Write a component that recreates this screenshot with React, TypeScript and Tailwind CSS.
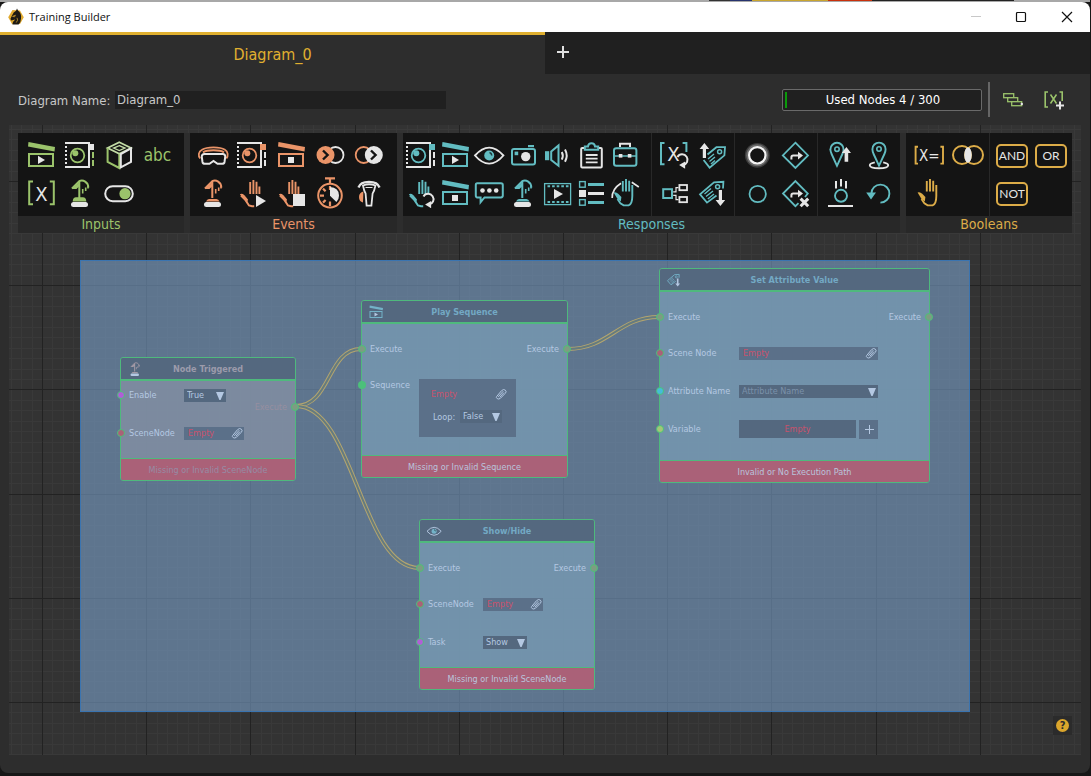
import React from "react";

const W = "#e6e6e6";
const GREEN = "#9bc36b";
const ORANGE = "#ea9468";
const TEAL = "#62bcc1";
const GOLD = "#dcac48";

type Tint = { c: string };

function Svg({ children }: { children: React.ReactNode }) {
  return (
    <svg viewBox="0 0 32 32" className="h-8 w-8" fill="none" aria-hidden="true">
      {children}
    </svg>
  );
}

/* ---------- palette icons ---------- */

function Clap({ c, stop, light = W }: Tint & { stop?: boolean; light?: string }) {
  return (
    <>
      <path d="M3.5 3 30 8 29.5 12.6 3 7.6Z" fill={c} />
      <rect x="4" y="15" width="24" height="12" stroke={c} strokeWidth="2" />
      {stop ? <rect x="13" y="18" width="6" height="6" fill={light} /> : <path d="M13 16.8 20 20.9 13 25Z" fill={light} />}
    </>
  );
}

function FrameEye({ c, square, dash }: Tint & { square: string; dash: string }) {
  return (
    <>
      <path d="M1 4H25V28H1" stroke={W} strokeWidth="2" />
      <path d="M2 3V29" stroke={W} strokeWidth="2" strokeDasharray="2 2" />
      <rect x="24" y="5" width="6" height="6" fill={square} />
      <path d="M29 13V19M29 21V27" stroke={dash} strokeWidth="2" />
      <circle cx="13.5" cy="16.5" r="6.8" stroke={c} strokeWidth="1.8" />
      <circle cx="11.3" cy="14.3" r="3" fill={c} />
    </>
  );
}

function Cube() {
  return (
    <>
      <path d="M16.3 3.3 28 9 16.3 14.7 4.6 9Z" stroke="#c2dba5" strokeWidth="1.8" />
      <path d="M16.3 6.6 22 9.1 16.3 11.6 10.6 9.1Z" stroke="#c2dba5" strokeWidth="1.3" />
      <path d="M4.6 9V23L16.3 29V14.7" stroke={GREEN} strokeWidth="2" />
      <path d="M28 9.5V23L17.8 28.4V15.2Z" stroke={W} strokeWidth="2" />
    </>
  );
}

function BracketX() {
  return (
    <>
      <path d="M8 4.5H4.2V27.3H8M24.8 4.5H28.8V27.3H24.8" stroke={GREEN} strokeWidth="2" />
      <text x="16.5" y="23.6" textAnchor="middle" fontSize="20" fill={W} className="font-['DejaVu_Sans_Condensed','Noto_Sans',sans-serif]">X</text>
    </>
  );
}

function Lever({ c, low, light = W }: Tint & { low?: boolean; light?: string }) {
  return (
    <>
      <path d="M8 11.5 15.2 4.2C19 2.3 24.3 5 24.3 10.5" stroke={c} strokeWidth="2" />
      <path d="M7.5 12 16 5V8.5L12.5 12Z" fill={c} />
      <path d="M15.3 5V21" stroke={c} strokeWidth="2" />
      <path d="M18.7 12V16.5M21.7 10.5V14M24 8V11.5" stroke={c} strokeWidth="1.6" />
      {low ? (
        <path d="M9 24.5Q10 22 12 22H19.5Q21.5 22 22.5 24.5Z" fill={c} />
      ) : (
        <path d="M8.7 24.5Q9 20.3 12 20.3H19Q22 20.3 22.3 24.5Z" fill={c} />
      )}
      <rect x="7" y="25" width="17" height="5" rx="2.5" fill={light} />
    </>
  );
}

function Toggle() {
  return (
    <>
      <rect x="2.2" y="9.2" width="27.6" height="15" rx="7.5" stroke={W} strokeWidth="2" />
      <circle cx="22" cy="16.7" r="5.6" fill={GREEN} />
    </>
  );
}

function Goggles() {
  return (
    <>
      <path d="M3.2 19.5C1 17 1.2 12.8 5 10.8 10 7.6 23 7.6 28 10.8 31.2 12.6 31.4 17 29.4 19.5" stroke={ORANGE} strokeWidth="1.8" />
      <path d="M6 13.4C10 10.6 23 10.6 27 13.4" stroke={ORANGE} strokeWidth="2" />
      <path d="M7.5 15H25.6Q28.4 15 28.2 17.8L27.5 23Q27.2 24.8 25 24.8H20.5L16.5 22 12.5 24.8H8Q5.8 24.8 5.5 23L4.8 17.8Q4.7 15 7.5 15Z" stroke={W} strokeWidth="2" />
    </>
  );
}

function CircleArrow({ flip }: { flip?: boolean }) {
  return flip ? (
    <>
      <circle cx="10.7" cy="16" r="8" stroke={ORANGE} strokeWidth="1.8" />
      <circle cx="20.8" cy="16" r="9" fill={W} />
      <path d="M18 11.5 22.6 16 18 20.5" stroke="#141414" strokeWidth="2.4" />
    </>
  ) : (
    <>
      <circle cx="21.5" cy="16" r="8" stroke={W} strokeWidth="1.8" />
      <circle cx="11.5" cy="16" r="9" fill={ORANGE} />
      <path d="M9 11.5 13.6 16 9 20.5" stroke="#141414" strokeWidth="2.4" />
    </>
  );
}

function HandBase({ c }: Tint) {
  return (
    <>
      <path d="M14.2 5V17M17.4 3V17M20.5 4.8V17M23.4 9.5V17" stroke={c} strokeWidth="1.9" />
      <path d="M3.8 17.2Q6 16 8.4 18.2L12 22.5 11.2 25.5 8.5 22.8Z" fill={c} />
      <path d="M5 18.5 9 22.5 13 28.5 16 29.3H18.2" stroke={c} strokeWidth="2" />
    </>
  );
}

function HandPlay() {
  return (
    <>
      <HandBase c={ORANGE} />
      <path d="M20 18 30 24 20 30Z" fill={W} />
    </>
  );
}

function HandStop() {
  return (
    <>
      <HandBase c={ORANGE} />
      <rect x="18" y="17" width="12" height="12" fill={W} />
    </>
  );
}

function RotateArrow({ x, y }: { x: number; y: number }) {
  return (
    <g transform={`translate(${x} ${y})`}>
      <path d="M-5 -2.5A5.4 5.4 0 1 1 0.5 5.6" stroke={W} strokeWidth="2" />
      <path d="M2.6 2V9.2L-3.4 5.6Z" fill={W} />
    </g>
  );
}

function HandRotate() {
  return (
    <>
      <HandBase c={TEAL} />
      <RotateArrow x={23.5} y={22} />
    </>
  );
}

function Stopwatch() {
  return (
    <>
      <circle cx="16" cy="18.6" r="11.8" stroke={ORANGE} strokeWidth="2" />
      <path d="M11 1.4H21M16 2V6.5M16 9V13M6 18.6H10M16 24.5V29M9 11.6 11.6 14.2M9 25.6 11.6 23" stroke={ORANGE} strokeWidth="2.2" />
      <path d="M16 10Q25 10.5 25 18.6 25 22.6 22.4 25L16 18.8Z" fill={W} />
    </>
  );
}

function Tracker() {
  return (
    <>
      <path d="M5.5 10.5C8 3 24 3 26.5 10.5" stroke={W} strokeWidth="2.4" />
      <path d="M10 8.5Q11 14 12.6 16.5L13.6 28.6H18.4L19.6 16.5Q21.4 14 22.4 8.5Q16 6 10 8.5Z" stroke={W} strokeWidth="1.8" />
      <path d="M12.5 10.5H19.5" stroke={W} strokeWidth="1.2" />
      <path d="M10.4 14.5Q6 15.5 6 20T10 25.5Z" fill={ORANGE} />
    </>
  );
}

function Eye({ c, light = W }: Tint & { light?: string }) {
  return (
    <>
      <path d="M2 16.5Q9 8.6 16.2 8.6T30.4 16.5Q23.5 24.6 16.2 24.6T2 16.5Z" stroke={light} strokeWidth="1.9" />
      <circle cx="16.2" cy="16.5" r="5" fill={c} />
      <path d="M16.5 13.5Q18.6 14 18.8 16.5" stroke="#1d3a3c" strokeWidth="1.6" />
    </>
  );
}

function Camera() {
  return (
    <>
      <rect x="5" y="10" width="23" height="15.5" rx="2" stroke={TEAL} strokeWidth="2" />
      <rect x="21" y="6" width="6" height="2.2" fill={TEAL} />
      <circle cx="18.7" cy="17.6" r="4.7" fill={W} />
      <rect x="7.6" y="12.6" width="3.6" height="3.6" fill={TEAL} />
    </>
  );
}

function Speaker() {
  return (
    <>
      <rect x="4" y="12.2" width="4.2" height="9" fill={TEAL} />
      <path d="M10.2 12.5 17.5 6.4V26.8L10.2 21Z" stroke={TEAL} strokeWidth="2" />
      <path d="M20.8 13Q22.8 16.7 20.8 20.6M24 10.6Q27.4 16.6 24 22.8" stroke={W} strokeWidth="2" />
    </>
  );
}

function Clipboard() {
  return (
    <>
      <rect x="6.2" y="9" width="20.6" height="19.6" rx="1" stroke={W} strokeWidth="2" />
      <path d="M9.8 10.8V7.4H13Q13.4 4.2 16.5 4.2T20 7.4H23.2V10.8Z" fill="#141414" stroke={TEAL} strokeWidth="2" />
      <path d="M10.8 16H22.6M10.8 19.7H22.6M10.8 23.4H22.6" stroke={W} strokeWidth="1.8" />
    </>
  );
}

function Briefcase() {
  return (
    <>
      <path d="M11 8V4.8H21V8" stroke={W} strokeWidth="2" />
      <rect x="5" y="9.2" width="22.4" height="17.6" rx="2.2" stroke={TEAL} strokeWidth="2" />
      <path d="M5 17H27.4" stroke={TEAL} strokeWidth="1.6" />
      <rect x="9.8" y="15" width="3.6" height="3.6" fill={W} />
      <rect x="18.8" y="15" width="3.6" height="3.6" fill={W} />
    </>
  );
}

function Speech() {
  return (
    <>
      <path d="M4.2 6.2H28Q29.8 6.2 29.8 8V18.6Q29.8 20.4 28 20.4H11.5L7.6 25.2V20.4H4.2Q2.8 20.4 2.8 18.6V8Q2.8 6.2 4.2 6.2Z" stroke={TEAL} strokeWidth="2" />
      <circle cx="9.5" cy="13.5" r="2.3" fill={W} />
      <circle cx="16.4" cy="13.5" r="2.3" fill={W} />
      <circle cx="23.2" cy="13.5" r="2.3" fill={W} />
    </>
  );
}

function Film() {
  return (
    <>
      <rect x="3.6" y="6.6" width="26" height="21" stroke={TEAL} strokeWidth="1.3" />
      <path d="M6.5 9.2H27.5M6.5 25H27.5" stroke={TEAL} strokeWidth="2" strokeDasharray="2.6 2" />
      <path d="M13 12 22 17 13 22Z" fill={W} />
    </>
  );
}

function ListRows() {
  return (
    <>
      <rect x="4.6" y="4.6" width="5.6" height="5.6" stroke={TEAL} strokeWidth="1.4" />
      <rect x="4" y="13" width="7" height="7" fill={W} />
      <rect x="4.6" y="22.6" width="5.6" height="5.6" stroke={TEAL} strokeWidth="1.4" />
      <path d="M13 7.5H29M13 25.5H29" stroke={TEAL} strokeWidth="3" />
      <path d="M13 16.5H29" stroke={W} strokeWidth="3" />
    </>
  );
}

function FullHand({ c }: Tint) {
  return (
    <>
      <path d="M13.8 4V14.5M17 2V14.5M20.2 3.8V14.5M23.3 8V19Q23.3 27 19.6 28.4H14.6L11.4 26.4 8.5 22" stroke={c} strokeWidth="1.9" />
      <path d="M4.6 15.5Q7 14.6 9.2 16.8L12.4 20 11.8 24.6 8.2 21.5Z" fill={c} />
    </>
  );
}

function Gesture() {
  return (
    <>
      <path d="M3.2 21Q2.8 12 12 6.2M22.8 5.2 29.8 10" stroke={W} strokeWidth="1.7" />
      <FullHand c={TEAL} />
    </>
  );
}

function SetVariable() {
  return (
    <>
      <path d="M6.5 4H3V25.2H6.5M24.6 4H28.4V13" stroke={TEAL} strokeWidth="2" />
      <text x="15.5" y="21.6" textAnchor="middle" fontSize="20" fill={W} className="font-['DejaVu_Sans_Condensed','Noto_Sans',sans-serif]">X</text>
      <RotateArrow x={24.5} y={20.5} />
    </>
  );
}

function TagUp() {
  return (
    <>
      <path d="M10.5 15.5 19.4 8.2H28L27.4 16.4 12.6 28.6 6.6 21" stroke={TEAL} strokeWidth="1.8" />
      <circle cx="22.6" cy="12.8" r="2" stroke={TEAL} strokeWidth="1.5" />
      <path d="M11 20 17 15M12.5 22.5 18 18M14 25 18 21.5" stroke={TEAL} strokeWidth="1.4" />
      <path d="M7.4 4 12.2 10H9V19H5.8V10H2.6Z" fill={W} />
    </>
  );
}

function TagDown({ c = TEAL, light = W }: { c?: string; light?: string }) {
  return (
    <>
      <path d="M19.5 18.5 10 25.6 3 17.3 17 5.4 26.4 4.8 26 11.5" stroke={c} strokeWidth="1.8" />
      <circle cx="20.6" cy="9.8" r="2" stroke={c} strokeWidth="1.5" />
      <path d="M7.5 17 14 11.5M9 19.5 16 14M10.8 22 17 17" stroke={c} strokeWidth="1.4" />
      <path d="M23.4 29 18.6 23H21.8V13H25V23H28.2Z" fill={light} />
    </>
  );
}

function Flow() {
  return (
    <>
      <rect x="5.2" y="12.2" width="8.8" height="8.8" stroke={TEAL} strokeWidth="2" />
      <rect x="21.4" y="8" width="7.6" height="5.2" stroke={W} strokeWidth="1.8" />
      <rect x="21.4" y="20" width="7.6" height="5.2" stroke={W} strokeWidth="1.8" />
      <path d="M20.5 10.6H18V14.8H15.2M20.5 22.6H18V18.4H15.2" stroke={W} strokeWidth="1.2" />
    </>
  );
}

function Glow() {
  return (
    <>
      <circle cx="16.3" cy="16.3" r="12.4" fill="#3c3c3c" />
      <circle cx="16.3" cy="16.3" r="11" fill="#6c6c6c" />
      <circle cx="16.3" cy="16.3" r="8.2" fill="#141414" stroke="#f4f4f4" strokeWidth="2.2" />
    </>
  );
}

function Diamond({ x }: { x?: boolean }) {
  return (
    <>
      <path d={x ? "M18.5 26.2 15.4 29.2 3 16.5 15.4 4 27.8 16.5 25 20" : "M15.4 3.7 28 16.4 15.4 29 2.8 16.4Z"} stroke={TEAL} strokeWidth="1.8" />
      <path d="M11.4 20.6V18.4Q11.4 16.6 13.2 16.6H19" stroke={W} strokeWidth="2" />
      <path d="M18 12.8 23 16.6 18 20.4Z" fill={W} />
      {x && <path d="M20.6 21.6 28.2 29.2M28.2 21.6 20.6 29.2" stroke={W} strokeWidth="3" />}
    </>
  );
}

function Ring() {
  return <circle cx="16.7" cy="17" r="8.2" stroke={TEAL} strokeWidth="1.8" />;
}

function PinUp() {
  return (
    <>
      <path d="M13 26.8 7.6 15Q6.3 12 6.4 10.4A6.6 6.6 0 0 1 19.6 10.4Q19.6 12.4 18.4 15Z" stroke={TEAL} strokeWidth="1.9" />
      <circle cx="13" cy="10.2" r="2.2" stroke={TEAL} strokeWidth="1.6" />
      <path d="M22.4 8 27 14H24.2V22.8H20.6V14H17.8Z" fill={W} />
    </>
  );
}

function PinPlace() {
  return (
    <>
      <path d="M11.8 23.4Q6.8 24.4 6.8 26.2 7 29.2 16 29.2T25.2 26.2Q25.2 24.4 20.2 23.4" stroke={W} strokeWidth="1.9" />
      <path d="M16 26.6 10.6 15Q9.4 12 9.4 10.2A6.6 6.6 0 0 1 22.6 10.2Q22.6 12.4 21.4 15Z" stroke={TEAL} strokeWidth="1.9" />
      <circle cx="16" cy="10" r="2.2" stroke={TEAL} strokeWidth="1.6" />
    </>
  );
}

function Drop() {
  return (
    <>
      <path d="M12 4V11.6M17 2V9.4M22 4V11.6" stroke={W} strokeWidth="2" />
      <circle cx="17" cy="18.8" r="6" stroke={TEAL} strokeWidth="1.9" />
      <path d="M4 29H29" stroke={W} strokeWidth="2" />
    </>
  );
}

function Undo() {
  return (
    <>
      <path d="M8.4 16.5A9 9 0 1 1 17.4 25.6" stroke={TEAL} strokeWidth="1.9" />
      <path d="M3.2 15.4H13L8 22.6Z" fill={TEAL} />
    </>
  );
}

function Compare() {
  return (
    <>
      <path d="M5 7.8H2.6V24.6H5M27.4 7.8H30V24.6H27.4" stroke={GOLD} strokeWidth="1.9" />
      <text x="16.4" y="22" textAnchor="middle" fontSize="15" fill={W} className="font-['DejaVu_Sans_Condensed','Noto_Sans',sans-serif]">X=</text>
    </>
  );
}

function Venn() {
  return (
    <>
      <circle cx="10" cy="16" r="9" stroke={GOLD} strokeWidth="2" />
      <circle cx="22" cy="16" r="9" stroke={GOLD} strokeWidth="2" />
      <ellipse cx="16" cy="16" rx="3.7" ry="7.8" fill={W} />
    </>
  );
}

/* ---------- palette ---------- */

type Tool = { label: string; icon: React.ReactNode };

function ToolButton({ label, icon }: Tool) {
  return (
    <button type="button" aria-label={label} title={label} className="flex h-[38px] items-center justify-center hover:bg-white/5">
      <Svg>{icon}</Svg>
    </button>
  );
}

function LogicButton({ children }: { children: string }) {
  return (
    <div className="flex h-[38px] items-center justify-center pt-[2px]">
      <button type="button" className="h-6 w-8 rounded-[5px] border-2 border-[#dcac48] text-center font-['Lato',sans-serif] text-[12px] leading-5 text-[#e6e6e6]">
        {children}
      </button>
    </div>
  );
}

function Group({ title, tone, cols, children }: { title: string; tone: string; cols: string; children: React.ReactNode }) {
  return (
    <section className="flex flex-col bg-[#282828]">
      <div className={"grid h-[83px] gap-px " + cols}>{children}</div>
      <h2 className={"text-center text-[14px] leading-[17px] " + tone}>{title}</h2>
    </section>
  );
}

const PAIR = "grid content-start grid-cols-[repeat(2,39px)] bg-[#141414] pt-[3px] pl-[3px]";

function Palette() {
  return (
    <div className="relative grid grid-cols-[166fr_207fr_497fr_166fr] gap-[6px] bg-[#2d2d2d]">
      <Group title="Inputs" tone="text-[#9bc36b]" cols="grid-cols-1">
        <div className="grid grid-cols-[repeat(4,39px)] content-start bg-[#141414] pt-[3px] pl-[3px]">
          <ToolButton label="Sequence" icon={<Clap c={GREEN} />} />
          <ToolButton label="Scene node" icon={<FrameEye c={GREEN} square={W} dash={GREEN} />} />
          <ToolButton label="Object" icon={<Cube />} />
          <button type="button" className="h-[38px] text-center text-[17px] leading-[36px] text-[#9bc36b]">abc</button>
          <ToolButton label="Variable" icon={<BracketX />} />
          <ToolButton label="Trigger" icon={<Lever c={GREEN} />} />
          <ToolButton label="Toggle" icon={<Toggle />} />
        </div>
      </Group>

      <Group title="Events" tone="text-[#ea9468]" cols="grid-cols-1">
        <div className="grid grid-cols-[repeat(5,39px)] content-start bg-[#141414] pt-[3px] pl-[3px]">
          <ToolButton label="Headset" icon={<Goggles />} />
          <ToolButton label="Scene node event" icon={<FrameEye c={ORANGE} square={ORANGE} dash={W} />} />
          <ToolButton label="Sequence stopped" icon={<Clap c={ORANGE} stop />} />
          <ToolButton label="Enter" icon={<CircleArrow />} />
          <ToolButton label="Exit" icon={<CircleArrow flip />} />
          <ToolButton label="Node triggered" icon={<Lever c={ORANGE} low />} />
          <ToolButton label="Grab started" icon={<HandPlay />} />
          <ToolButton label="Grab stopped" icon={<HandStop />} />
          <ToolButton label="Timer" icon={<Stopwatch />} />
          <ToolButton label="Tracker" icon={<Tracker />} />
        </div>
      </Group>

      <Group title="Responses" tone="text-[#62bcc1]" cols="grid-cols-[247fr_82fr_82fr_82fr]">
        <div className="grid grid-cols-[repeat(7,34px)] content-start bg-[#141414] pt-[3px] pl-px">
          <ToolButton label="Scene node response" icon={<FrameEye c={TEAL} square={TEAL} dash={W} />} />
          <ToolButton label="Play sequence" icon={<Clap c={TEAL} />} />
          <ToolButton label="Show or hide" icon={<Eye c={TEAL} />} />
          <ToolButton label="Snapshot" icon={<Camera />} />
          <ToolButton label="Play sound" icon={<Speaker />} />
          <ToolButton label="Checklist" icon={<Clipboard />} />
          <ToolButton label="Toolbox" icon={<Briefcase />} />
          <ToolButton label="Reset grab" icon={<HandRotate />} />
          <ToolButton label="Stop sequence" icon={<Clap c={TEAL} stop />} />
          <ToolButton label="Message" icon={<Speech />} />
          <ToolButton label="Trigger node" icon={<Lever c={TEAL} low />} />
          <ToolButton label="Play video" icon={<Film />} />
          <ToolButton label="Menu" icon={<ListRows />} />
          <ToolButton label="Gesture" icon={<Gesture />} />
        </div>
        <div className={PAIR}>
          <ToolButton label="Set variable" icon={<SetVariable />} />
          <ToolButton label="Get attribute value" icon={<TagUp />} />
          <ToolButton label="Branch" icon={<Flow />} />
          <ToolButton label="Set attribute value" icon={<TagDown />} />
        </div>
        <div className={PAIR}>
          <ToolButton label="Highlight" icon={<Glow />} />
          <ToolButton label="Start route" icon={<Diamond />} />
          <ToolButton label="Remove highlight" icon={<Ring />} />
          <ToolButton label="Cancel route" icon={<Diamond x />} />
        </div>
        <div className={PAIR}>
          <ToolButton label="Raise location" icon={<PinUp />} />
          <ToolButton label="Place at location" icon={<PinPlace />} />
          <ToolButton label="Drop" icon={<Drop />} />
          <ToolButton label="Reset" icon={<Undo />} />
        </div>
      </Group>

      <Group title="Booleans" tone="text-[#dcac48]" cols="grid-cols-2">
        <div className={PAIR}>
          <ToolButton label="Compare" icon={<Compare />} />
          <ToolButton label="Overlap" icon={<Venn />} />
          <ToolButton label="Is grabbed" icon={<FullHand c={GOLD} />} />
        </div>
        <div className={PAIR}>
          <LogicButton>AND</LogicButton>
          <LogicButton>OR</LogicButton>
          <LogicButton>NOT</LogicButton>
        </div>
      </Group>
    </div>
  );
}

/* ---------- canvas ---------- */

const GRID_TILE = 521;
const STEPS = Array.from({ length: 50 }, (_, i) => i);
const at = (i: number) => Math.round((i * GRID_TILE) / 50) + 0.5;

function Grid() {
  return (
    <svg className="absolute inset-0 h-full w-full" aria-hidden="true">
      <defs>
        <pattern id="grid" width={GRID_TILE} height={GRID_TILE} patternUnits="userSpaceOnUse" patternTransform="translate(33 56)">
          {STEPS.filter((i) => i % 10).map((i) => (
            <path key={i} d={`M${at(i)} 0V${GRID_TILE}M0 ${at(i)}H${GRID_TILE}`} stroke="#393939" />
          ))}
          {STEPS.filter((i) => i % 10 === 0).map((i) => (
            <path key={i} d={`M${at(i)} 0V${GRID_TILE}M0 ${at(i)}H${GRID_TILE}`} stroke="#222222" />
          ))}
        </pattern>
      </defs>
      <rect width="100%" height="100%" fill="url(#grid)" />
    </svg>
  );
}

const WIRES = [
  "M287 281C322 281 318 224 352 224",
  "M287 281C345 281 352 443 410 443",
  "M559 224C600 224 609 192 650 192",
];

function Wires() {
  return (
    <svg className="absolute inset-0 h-full w-full" fill="none" aria-hidden="true">
      {WIRES.map((d) => (
        <g key={d}>
          <path d={d} stroke="#b3a56f" strokeWidth="4" />
          <path d={d} stroke="#657b7f" strokeWidth="2" />
        </g>
      ))}
    </svg>
  );
}

function Port({ tone, side = "left" }: { tone: string; side?: "left" | "right" }) {
  return (
    <span className={"absolute top-1/2 h-2 w-2 -translate-y-1/2 rounded-full border border-[#4cc07a] " + tone + (side === "left" ? " -left-1" : " -right-1")} />
  );
}

const EXEC = "bg-[#7e9c82]";

function Row({ label, port, width, size = "h-[38px]", out, children }: {
  label: string; port: string; width: string; size?: string; out?: boolean; children?: React.ReactNode;
}) {
  return (
    <div className={"relative flex items-center px-2 " + size}>
      <Port tone={port} />
      <span className={"shrink-0 whitespace-nowrap " + width}>{label}</span>
      {children}
      {out && (
        <>
          <span className="ml-auto">Execute</span>
          <Port tone={EXEC} side="right" />
        </>
      )}
    </div>
  );
}

function Clip() {
  return (
    <svg viewBox="0 0 12 12" className="h-3 w-3" fill="none" stroke="#b4c8e2" aria-hidden="true">
      <path d="M3.2 8.8 8.3 3.2M1.6 8.6 6.5 2.7Q8.6.6 10.4 2.2T10 5.6L5.4 10.3Q3.6 11.6 2.2 10.6T1.6 8.6M4.8 9.2 9 4.6" />
    </svg>
  );
}

function NodeField({ width, tone = "bg-[#5b7089]" }: { width: string; tone?: string }) {
  return (
    <button type="button" className={"flex h-[13px] items-center justify-between pr-px pl-1 text-[#c9526c] " + width + " " + tone}>
      Empty
      <Clip />
    </button>
  );
}

function Choice({ label, value, width, muted }: { label: string; value: string; width: string; muted?: boolean }) {
  return (
    <span className={"relative block h-[13px] bg-[#54687f] " + width}>
      <select aria-label={label} defaultValue={value} className={"block h-[13px] w-full appearance-none pl-[3px] leading-[13px] outline-none " + (muted ? "text-[#7b91aa]" : "")}>
        <option>{value}</option>
      </select>
      <svg viewBox="0 0 8 8" className="pointer-events-none absolute top-[3px] right-[2px] h-2 w-2" aria-hidden="true">
        <path d="M0 0H8L4.6 8H3.4Z" fill="#b4c8e2" />
      </svg>
    </span>
  );
}

function Node({ title, error, icon, place, body, tone = "text-[#73a9c4]", foot = "text-[#b9c4dc]", children }: {
  title: string; error: string; icon: React.ReactNode; place: string; body: string; tone?: string; foot?: string; children: React.ReactNode;
}) {
  return (
    <article className={"absolute rounded-[3px] border border-[#4fb97d] text-[9px] leading-3 text-[#b4c8e2] " + place}>
      <header className={"relative flex h-[23px] items-center justify-center rounded-t-[2px] border-b-2 border-[#4fb97d] bg-[#54687f] " + tone}>
        <svg viewBox="0 0 32 32" className="absolute top-[3px] left-1.5 h-4 w-4" fill="none" aria-hidden="true">{icon}</svg>
        <h3 className="font-bold">{title}</h3>
      </header>
      <div className={"relative " + body}>{children}</div>
      <footer className={"flex h-[22px] items-center justify-center rounded-b-[2px] border-t border-[#4fb97d] bg-[#aa6178] " + foot}>{error}</footer>
    </article>
  );
}

function Diagram() {
  const light = "#b4c8e2";
  const mid = "#73b2c8";
  return (
    <div className="absolute inset-0">
      <div className="absolute top-[135px] left-[71px] h-[452px] w-[890px] border border-[#3a74b0] bg-[#7ba1cb]/60" />
      <Wires />

      <Node title="Node Triggered" error="Missing or Invalid SceneNode" place="top-[232px] left-[111px] w-[176px]" body="bg-[#808da1]/90 pt-1 pb-[15px]" tone="text-[#9c9bab]" foot="text-[#968ba4]" icon={<Lever c="#a39aa6" low light={light} />}>
        <Row label="Enable" port="bg-[#b05fd6]" width="w-[55px]" size="h-5">
          <Choice label="Enable" value="True" width="w-[42px]" />
        </Row>
        <div className="absolute top-[16px] right-0 flex h-5 w-full items-center justify-end pr-2 text-[#968f9f]">
          Execute
          <Port tone={EXEC} side="right" />
        </div>
        <div className="pt-[18px]">
          <Row label="SceneNode" port="bg-[#aa6178]" width="w-[55px]" size="h-5">
            <NodeField width="w-[60px]" />
          </Row>
        </div>
      </Node>

      <Node title="Play Sequence" error="Missing or Invalid Sequence" place="top-[175px] left-[352px] w-[207px]" body="bg-[#7496ae]/90 pt-2 pb-[18px]" icon={<Clap c={mid} light={light} />}>
        <Row label="Execute" port={EXEC} width="" size="h-[34px]" out />
        <div className="flex items-start px-2 pt-[13px]">
          <span className="relative w-[49px] shrink-0">
            Sequence
            <span className="absolute top-[2px] -left-3 h-2 w-2 rounded-full bg-[#4cc07a]" />
          </span>
          <div className="flex w-[97px] flex-col gap-[10px] bg-[#5b7089] px-2 pt-2 pb-[14px]">
            <NodeField width="w-full" />
            <div className="flex items-center justify-between pr-1.5 pl-1.5">
              <span>Loop:</span>
              <Choice label="Loop" value="False" width="w-[42px]" />
            </div>
          </div>
        </div>
      </Node>

      <Node title="Set Attribute Value" error="Invalid or No Execution Path" place="top-[143px] left-[650px] w-[271px]" body="bg-[#7496ae]/90 pt-2 pb-3" icon={<TagDown c={mid} light={light} />}>
        <Row label="Execute" port={EXEC} width="" size="h-[34px]" out />
        <Row label="Scene Node" port="bg-[#aa6178]" width="w-[71px]">
          <NodeField width="w-[139px]" />
        </Row>
        <Row label="Attribute Name" port="bg-[#46bcd8]" width="w-[71px]">
          <Choice label="Attribute Name" value="Attribute Name" width="w-[139px]" muted />
        </Row>
        <Row label="Variable" port="bg-[#a4c678]" width="w-[71px]">
          <button type="button" className="h-[18px] w-[117px] bg-[#54687f] text-center text-[#c9526c]">Empty</button>
          <button type="button" aria-label="Add variable" className="ml-[3px] flex h-[19px] w-[19px] items-center justify-center bg-[#5b7089]">
            <svg viewBox="0 0 10 10" className="h-[10px] w-[10px]" stroke="#b4c8e2" aria-hidden="true"><path d="M5.5 1V10M1 5.5H10" /></svg>
          </button>
        </Row>
      </Node>

      <Node title="Show/Hide" error="Missing or Invalid SceneNode" place="top-[394px] left-[410px] w-[176px]" body="bg-[#7496ae]/90 pt-2 pb-1.5" icon={<Eye c={mid} light={light} />}>
        <Row label="Execute" port={EXEC} width="" size="h-[34px]" out />
        <Row label="SceneNode" port="bg-[#aa6178]" width="w-[55px]">
          <NodeField width="w-[60px]" />
        </Row>
        <Row label="Task" port="bg-[#b05fd6]" width="w-[55px]">
          <Choice label="Task" value="Show" width="w-[44px]" />
        </Row>
      </Node>
    </div>
  );
}

/* ---------- window ---------- */

function Logo() {
  return (
    <svg viewBox="0 0 16 18" className="h-[18px] w-4" aria-hidden="true">
      <path d="M4.5 2 12 2.4 15.8 9.2 12 16H4L.2 9.2Z" fill="#e0a92e" />
      <path d="M4.4 16.4Q4.6 13.4 7.2 11.4 4.8 11.6 3.4 12.6L2.4 11 4 7.6Q5.4 4 8 2.8L9 .4 10 2.6Q13.6 5 13 10.4 12.8 14.6 10.6 16.6Z" fill="#1d1a14" />
      <path d="M4.6 8.4 7.4 7.2 6.6 8.8ZM9 9.8Q10.6 12 8.2 14.6" stroke="#e0a92e" strokeWidth=".7" fill="none" />
    </svg>
  );
}

function TitleBar() {
  return (
    <header className="flex h-[30px] items-center bg-white pl-2 font-['Open_Sans','Noto_Sans',sans-serif]">
      <Logo />
      <h1 className="ml-[5px] text-[11px] text-[#111]">Training Builder</h1>
      <div className="ml-auto flex h-full">
        <button type="button" aria-label="Minimize" className="flex w-[45px] items-center justify-center">
          <svg viewBox="0 0 12 12" className="h-3 w-3" stroke="#c8c8c8" aria-hidden="true"><path d="M1 5.5H11" /></svg>
        </button>
        <button type="button" aria-label="Maximize" className="flex w-[46px] items-center justify-center">
          <svg viewBox="0 0 12 12" className="h-3 w-3" fill="none" stroke="#111" strokeWidth="1.2" aria-hidden="true"><rect x="1.5" y="1.5" width="9" height="9" rx="1" /></svg>
        </button>
        <button type="button" aria-label="Close" className="flex w-[46px] items-center justify-center">
          <svg viewBox="0 0 12 12" className="h-3 w-3" stroke="#111" strokeWidth="1.2" aria-hidden="true"><path d="M1 1 11 11M11 1 1 11" /></svg>
        </button>
      </div>
    </header>
  );
}

export default function App() {
  return (
    <div className="flex min-h-screen flex-col bg-[#171717] pr-px pb-[3px] font-['DejaVu_Sans_Condensed','Noto_Sans',sans-serif]">
      <div className="flex h-[2px] bg-[#a8a8a8]">
        <span className="ml-[65%] h-px w-[2%] bg-[#333]" />
        <span className="h-px w-[2%] bg-[#27346e]" />
        <span className="h-px w-[7%] bg-[#c9a52e]" />
        <span className="h-px w-[4%] bg-[#c9300c]" />
        <span className="h-px w-[13%] bg-[#222]" />
      </div>
      <div className="flex flex-1 flex-col overflow-hidden rounded-[8px] bg-[#2d2d2d]">
        <TitleBar />
        <nav className="flex h-[42px] bg-[#202020]">
          <button type="button" className="w-1/2 border-t-[3px] border-[#e0b030] bg-[#2d2d2d] text-[16px] text-[#e0b030]">Diagram_0</button>
          <button type="button" aria-label="New diagram" className="ml-3 flex h-10 w-3 items-center justify-center">
            <svg viewBox="0 0 12 12" className="h-3 w-3" stroke="#e0e0e0" strokeWidth="2" aria-hidden="true"><path d="M6 0V12M0 6H12" /></svg>
          </button>
        </nav>

        <div className="flex h-[51px] items-center pr-[26px] pl-[18px] text-[#c8c8c8]">
          <label htmlFor="diagram-name" className="w-[97px] pt-[3px] text-[13px] whitespace-nowrap">Diagram Name:</label>
          <input id="diagram-name" type="text" defaultValue="Diagram_0" className="h-[18px] w-[331px] bg-[#202020] px-[2px] text-[13px] leading-[18px] outline-none" />
          <div className="ml-auto flex items-center">
            <div className="flex h-[22px] w-[200px] items-center rounded-[2px] border border-[#6a6a6a] bg-[#202020] px-[2px] py-[2px]">
              <span className="h-4 w-[2px] bg-[#0a9a0a]" />
              <span className="flex-1 text-center text-[13px] text-white">Used Nodes 4 / 300</span>
            </div>
            <span className="mx-[6px] h-[35px] w-[2px] bg-[#666]" />
            <button type="button" aria-label="Arrange nodes" className="ml-[7px] flex h-6 w-5 items-center justify-center">
              <svg viewBox="0 0 20 16" className="h-4 w-5" fill="#2d2d2d" stroke={GREEN} strokeWidth="1.3" aria-hidden="true">
                <rect x=".7" y="1.7" width="10" height="4" />
                <rect x="4.7" y="5.7" width="10" height="4" />
                <rect x="8.7" y="9.7" width="10" height="4" />
                <circle cx="18.8" cy="12" r="1.2" fill={W} stroke="none" />
              </svg>
            </button>
            <button type="button" aria-label="Add variable" className="ml-[21px] flex h-6 w-5 items-center justify-center">
              <svg viewBox="0 0 20 20" className="h-5 w-5" fill="none" stroke={GREEN} strokeWidth="1.6" aria-hidden="true">
                <path d="M4 2H1.2V17H4M15.5 2H18.2V11" />
                <path d="M6.5 4.5 12.5 13.5M12.5 4.5 6.5 13.5" strokeWidth="1.5" />
                <path d="M16 11.5V19.5M12 15.5H20" stroke={W} strokeWidth="2" />
              </svg>
            </button>
          </div>
        </div>

        <main className="relative mr-[9px] mb-[18px] ml-[9px] flex flex-1 flex-col overflow-hidden bg-[#333333] px-[9px] pt-2">
          <Grid />
          <Diagram />
          <Palette />
          <button type="button" aria-label="Help" className="absolute right-[9px] bottom-5 flex h-[19px] w-[19px] items-center justify-center bg-[#2b2b2b]">
            <span className="h-[13px] w-[13px] rounded-full bg-[#dba62c] text-center text-[11px] leading-[13px] font-bold text-[#2b2b2b]">?</span>
          </button>
        </main>
      </div>
    </div>
  );
}
